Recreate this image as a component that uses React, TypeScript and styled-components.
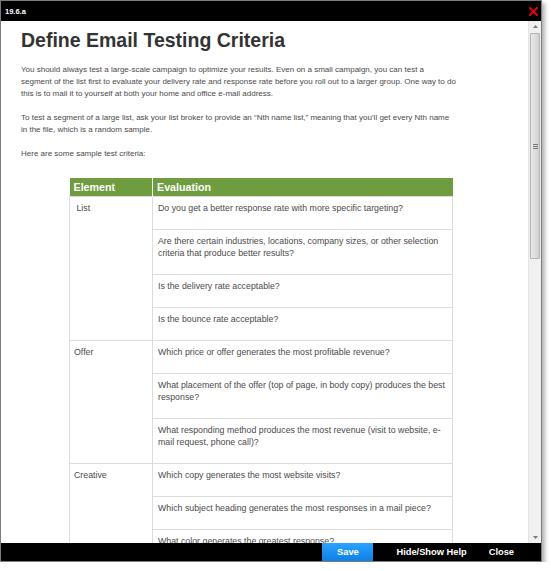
import React from 'react';
import styled, { createGlobalStyle } from 'styled-components';

const GlobalStyle = createGlobalStyle`
    html, body {
        margin: 0;
        padding: 0;
        background: #ffffff;
    }
    body {
        font-family: 'Liberation Sans', Arial, sans-serif;
    }
`;

interface CriteriaGroup {
    element: string;
    questions: string[];
}

const CRITERIA: CriteriaGroup[] = [
    {
        element: '\u00a0List',
        questions: [
            'Do you get a better response rate with more specific targeting?',
            'Are there certain industries, locations, company sizes, or other selection criteria that produce better results?',
            'Is the delivery rate acceptable?',
            'Is the bounce rate acceptable?',
        ],
    },
    {
        element: 'Offer',
        questions: [
            'Which price or offer generates the most profitable revenue?',
            'What placement of the offer (top of page, in body copy) produces the best response?',
            'What responding method produces the most revenue (visit to website, e-mail request, phone call)?',
        ],
    },
    {
        element: 'Creative',
        questions: [
            'Which copy generates the most website visits?',
            'Which subject heading generates the most responses in a mail piece?',
            'What color generates the greatest response?',
        ],
    },
];

// line breaks follow the reference wrap
const INTRO: string[][] = [
    [
        'You should always test a large-scale campaign to optimize your results. Even on a small campaign, you can test a',
        'segment of the list first to evaluate your delivery rate and response rate before you roll out to a larger group. One way to do',
        'this is to mail it to yourself at both your home and office e-mail address.',
    ],
    [
        'To test a segment of a large list, ask your list broker to provide an “Nth name list,” meaning that you’ll get every Nth name',
        'in the file, which is a random sample.',
    ],
    ['Here are some sample test criteria:'],
];

const CloseIcon = () => (
    <svg width="9" height="9" viewBox="0 0 9 9">
        <path d="M1 1 L8 8 M8 1 L1 8" stroke="#e3000f" strokeWidth="2" strokeLinecap="square" />
    </svg>
);

const ArrowIcon = ({ up }: { up?: boolean }) => (
    <svg width="5" height="3" viewBox="0 0 5 3">
        <path d={up ? 'M0 3 L2.5 0 L5 3 Z' : 'M0 0 L2.5 3 L5 0 Z'} fill="#7a7a7a" />
    </svg>
);

export default function App() {
    return (
        <>
            <GlobalStyle />
            <Window>
                <TitleBar>
                    <TitleText>19.6.a</TitleText>
                    <CloseIcon />
                </TitleBar>
                <Body>
                    <Content>
                        <Heading>Define Email Testing Criteria</Heading>
                        {INTRO.map((lines, i) => (
                            <Paragraph key={i}>
                                {lines.map((line) => (
                                    <Line key={line}>{line}</Line>
                                ))}
                            </Paragraph>
                        ))}
                        <CriteriaTable>
                            <colgroup>
                                <col style={{ width: 83 }} />
                                <col />
                            </colgroup>
                            <thead>
                                <tr>
                                    <HeadCell>Element</HeadCell>
                                    <HeadCell>Evaluation</HeadCell>
                                </tr>
                            </thead>
                            <tbody>
                                {CRITERIA.map((group) =>
                                    group.questions.map((q, i) => (
                                        <tr key={group.element + i}>
                                            {i === 0 && (
                                                <ElementCell rowSpan={group.questions.length}>
                                                    {group.element}
                                                </ElementCell>
                                            )}
                                            <Cell>{q}</Cell>
                                        </tr>
                                    )),
                                )}
                            </tbody>
                        </CriteriaTable>
                    </Content>
                    <Scrollbar>
                        <ScrollButton>
                            <ArrowIcon up />
                        </ScrollButton>
                        <ScrollTrack>
                            <Thumb>
                                <Grip />
                            </Thumb>
                        </ScrollTrack>
                        <ScrollButton>
                            <ArrowIcon />
                        </ScrollButton>
                    </Scrollbar>
                </Body>
                <Footer>
                    <SaveButton>Save</SaveButton>
                    <FooterButton>Hide/Show Help</FooterButton>
                    <FooterButton>Close</FooterButton>
                </Footer>
            </Window>
        </>
    );
}

const Window = styled.div`
    width: 540px;
    height: 560px;
    border: 1px solid #7c7c7c;
    display: flex;
    flex-direction: column;
    box-shadow: 3px 3px 4px rgba(0, 0, 0, 0.3);
    background: #ffffff;
    overflow: hidden;
`;

const TitleBar = styled.div`
    height: 20px;
    flex: none;
    background: #000000;
    display: flex;
    align-items: center;
    justify-content: space-between;
    padding: 0 3px 0 4px;
`;

const TitleText = styled.span`
    color: #ffffff;
    font-size: 7.5px;
    font-weight: bold;
`;

const Body = styled.div`
    flex: 1;
    display: flex;
    min-height: 0;
`;

const Content = styled.div`
    flex: 1;
    overflow: hidden;
    padding: 7px 20px 0 20px;
    color: #4a4a4a;
`;

const Heading = styled.h1`
    margin: 0 0 12px;
    font-size: 19.5px;
    line-height: 24px;
    font-weight: bold;
    color: #333333;
`;

const Paragraph = styled.p`
    margin: 0 0 12px;
    font-size: 8px;
    line-height: 12px;
`;

const Line = styled.span`
    display: block;
    white-space: nowrap;
`;

const CriteriaTable = styled.table`
    margin: 18px 0 0 48px;
    width: 384px;
    border-collapse: collapse;
    table-layout: fixed;
    font-size: 8.8px;
    line-height: 12px;
`;

const HeadCell = styled.th`
    height: 18px;
    padding: 0 4px;
    background: #6e9c3e;
    color: #ffffff;
    text-align: left;
    font-size: 10.7px;
    font-weight: bold;
    border-left: 1px solid #ffffff;
    &:first-child {
        border-left: none;
    }
`;

const Cell = styled.td`
    padding: 5px 5px 15px;
    vertical-align: top;
    border: 1px solid #dcdcdc;
    color: #4a4a4a;
`;

const ElementCell = styled(Cell)`
    padding-left: 4px;
`;

const Scrollbar = styled.div`
    width: 12px;
    flex: none;
    display: flex;
    flex-direction: column;
    background: #f0f0f0;
    border-left: 1px solid #e4e4e4;
`;

const ScrollButton = styled.div`
    height: 11px;
    flex: none;
    display: flex;
    align-items: center;
    justify-content: center;
`;

const ScrollTrack = styled.div`
    flex: 1;
    padding: 1px 1px 0;
`;

const Thumb = styled.div`
    height: 224px;
    border: 1px solid #b4b4b4;
    border-radius: 1px;
    background: linear-gradient(90deg, #e9e9e9 0%, #dcdcdc 60%, #cfcfcf 100%);
    display: flex;
    align-items: center;
    justify-content: center;
`;

const Grip = styled.div`
    width: 5px;
    height: 5px;
    background: repeating-linear-gradient(180deg, #777 0 1px, transparent 1px 2px);
`;

const Footer = styled.div`
    height: 18px;
    flex: none;
    background: #000000;
    display: flex;
    justify-content: flex-end;
    padding-right: 16px;
`;

const FooterButton = styled.div`
    display: flex;
    align-items: center;
    padding: 0 11px;
    color: #ffffff;
    font-size: 9.3px;
    font-weight: bold;
`;

const SaveButton = styled(FooterButton)`
    width: 51px;
    padding: 0;
    margin-right: 12px;
    justify-content: center;
    background: linear-gradient(180deg, #2ca3ff 0%, #0d7fe6 100%);
`;
